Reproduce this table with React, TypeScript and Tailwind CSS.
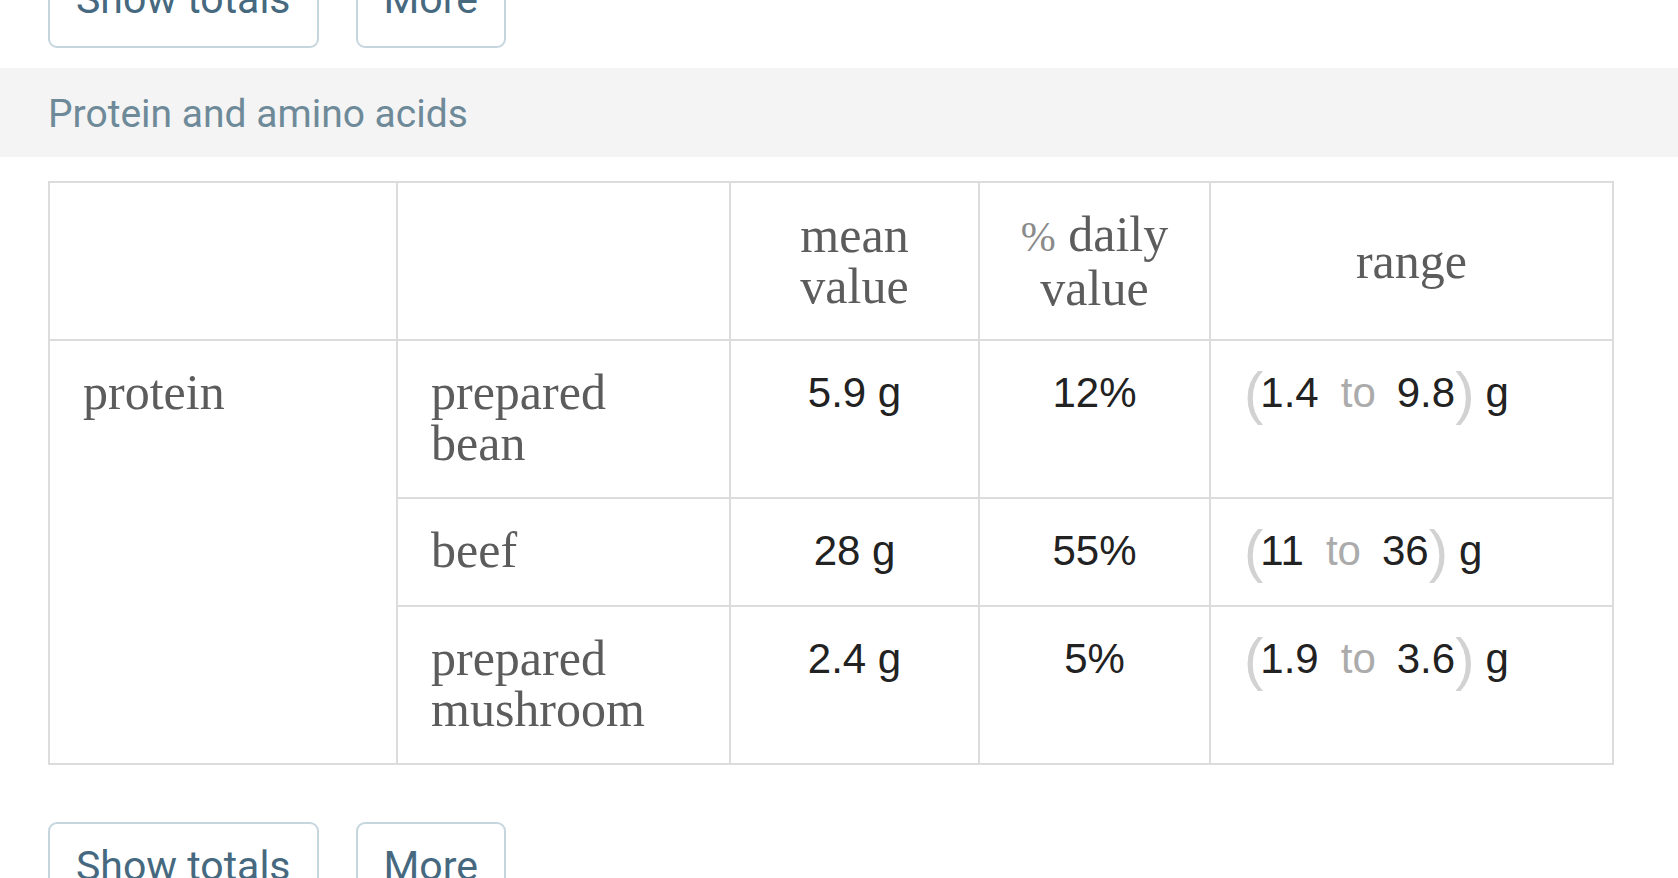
import React from "react";

const serif = "font-['Liberation_Serif',serif]";
const sans = "font-['Liberation_Sans',Arial,sans-serif]";

const ButtonRow = ({ className = "" }: { className?: string }) => (
  <div className={`flex gap-[37px] px-[48px] ${className}`}>
    {["Show totals", "More"].map((label) => (
      <button
        key={label}
        className="h-[93px] border-2 border-[#c6d6de] rounded-[9px] px-[26px] pt-[18px] flex items-start bg-white text-[41px] leading-[48px] text-[#46697f] font-['Roboto',sans-serif]"
      >
        {label}
      </button>
    ))}
  </div>
);

interface RangeProps {
  lo: string;
  hi: string;
}

const Range: React.FC<RangeProps> = ({ lo, hi }) => (
  <span className={`inline-flex items-center ${sans} text-[42px] leading-[51px] text-[#222]`}>
    <span className="text-[58px] leading-[51px] text-[#d2d2d2] font-light">(</span>
    <span className="ml-[-3px]">{lo}</span>
    <span className="ml-[22px] text-[#ababab]">to</span>
    <span className="ml-[21px]">{hi}</span>
    <span className="text-[58px] leading-[51px] text-[#d2d2d2] font-light">)</span>
    <span className="ml-[11px]">g</span>
  </span>
);

const rows = [
  { food: ["prepared", "bean"], mean: "5.9 g", daily: "12%", lo: "1.4", hi: "9.8" },
  { food: ["beef"], mean: "28 g", daily: "55%", lo: "11", hi: "36" },
  { food: ["prepared", "mushroom"], mean: "2.4 g", daily: "5%", lo: "1.9", hi: "3.6" },
];

const cell = "border-2 border-[#dcdcdc] align-top pt-[26px] pb-[28px]";

export default function App() {
  return (
    <div className="h-[878px] overflow-hidden bg-white">
      <ButtonRow className="mt-[-45px]" />

      <div className="mt-[20px] h-[89px] bg-[#f4f4f4] flex items-center pt-[3px] px-[48px] text-[39px] text-[#6e8a99] font-['Roboto',sans-serif]">
        Protein and amino acids
      </div>

      <div className="px-[48px] mt-[24px]">
        <table className="table-fixed border-collapse w-[1564px]">
          <colgroup>
            <col className="w-[348px]" />
            <col className="w-[333px]" />
            <col className="w-[249px]" />
            <col className="w-[231px]" />
            <col className="w-[403px]" />
          </colgroup>
          <thead>
            <tr className={`h-[158px] ${serif} text-[50px] leading-[51px] text-[#5c5c5c] font-normal`}>
              <th className="border-2 border-[#dcdcdc]" />
              <th className="border-2 border-[#dcdcdc]" />
              <th className="border-2 border-[#dcdcdc] font-normal text-center">
                mean
                <br />
                value
              </th>
              <th className="border-2 border-[#dcdcdc] font-normal text-center">
                <span className="text-[#8a8a8a] text-[42px]">%</span> daily
                <br />
                value
              </th>
              <th className="border-2 border-[#dcdcdc] font-normal text-center">range</th>
            </tr>
          </thead>
          <tbody>
            {rows.map((r, i) => (
              <tr key={i}>
                {i === 0 && (
                  <td
                    rowSpan={3}
                    className={`${cell} pl-[33px] ${serif} text-[50px] leading-[51px] text-[#5c5c5c]`}
                  >
                    protein
                  </td>
                )}
                <td className={`${cell} pl-[33px] ${serif} text-[50px] leading-[51px] text-[#5c5c5c]`}>
                  {r.food.map((f) => (
                    <div key={f}>{f}</div>
                  ))}
                </td>
                <td className={`${cell} text-center ${sans} text-[42px] leading-[51px] text-[#222]`}>
                  {r.mean}
                </td>
                <td className={`${cell} text-center ${sans} text-[42px] leading-[51px] text-[#222]`}>
                  {r.daily}
                </td>
                <td className={`${cell} pl-[33px]`}>
                  <Range lo={r.lo} hi={r.hi} />
                </td>
              </tr>
            ))}
          </tbody>
        </table>
      </div>

      <ButtonRow className="mt-[57px]" />
    </div>
  );
}
